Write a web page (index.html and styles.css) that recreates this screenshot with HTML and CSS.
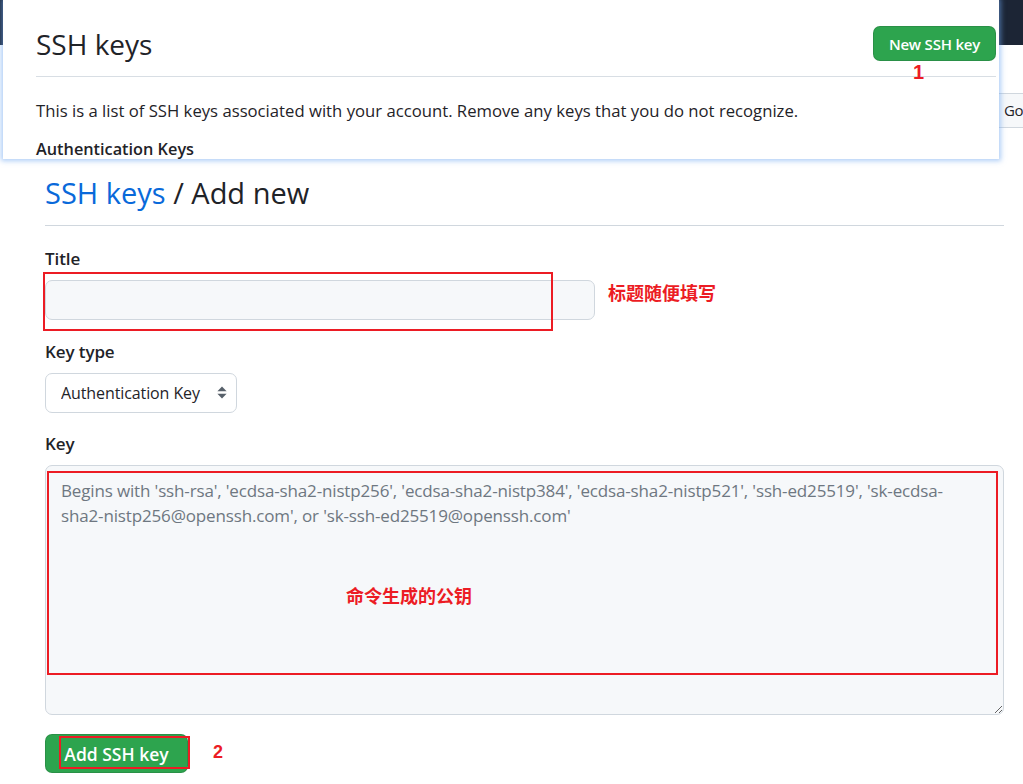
FILE: index.html
```html
<!DOCTYPE html>
<html lang="en">
<head>
<meta charset="utf-8">
<title>SSH keys / Add new</title>
<link rel="stylesheet" href="styles.css">
</head>
<body>
  <div class="topbar"></div>
  <div class="go-btn">Go</div>

  <section class="shot">
    <div class="shot-head">
      <h2 class="shot-title">SSH keys</h2>
      <button class="btn-primary btn-new" type="button">New SSH key</button>
    </div>
    <p class="shot-text">This is a list of SSH keys associated with your account. Remove any keys that you do not recognize.</p>
    <h3 class="shot-sub">Authentication Keys</h3>
    <span class="mark mark-one">1</span>
  </section>

  <main class="content">
    <div class="subhead">
      <h2 class="subhead-title"><a class="crumb" href="#">SSH keys</a> / Add new</h2>
    </div>

    <form class="form">
      <div class="group group-title">
        <label class="label" for="title">Title</label>
        <div class="field-row">
          <div class="field">
            <input id="title" class="input" type="text">
            <span class="box box-title"></span>
          </div>
          <span class="note note-title">标题随便填写</span>
        </div>
      </div>

      <div class="group group-type">
        <label class="label" for="type">Key type</label>
        <div class="select-wrap">
          <select id="type" class="select">
            <option>Authentication Key</option>
            <option>Signing Key</option>
          </select>
          <svg class="select-arrow" width="10" height="13" viewBox="0 0 10 13" aria-hidden="true">
            <path d="M5 0.5 L9.6 5.2 H0.4 Z" fill="#57606a"/>
            <path d="M0.4 7.8 H9.6 L5 12.5 Z" fill="#57606a"/>
          </svg>
        </div>
      </div>

      <div class="group group-key">
        <label class="label" for="key">Key</label>
        <div class="key-wrap">
          <textarea id="key" class="textarea" placeholder="Begins with 'ssh-rsa', 'ecdsa-sha2-nistp256', 'ecdsa-sha2-nistp384', 'ecdsa-sha2-nistp521', 'ssh-ed25519', 'sk-ecdsa-&#10;sha2-nistp256@openssh.com', or 'sk-ssh-ed25519@openssh.com'"></textarea>
          <span class="box box-key"></span>
          <span class="note note-key">命令生成的公钥</span>
        </div>
      </div>

      <div class="actions">
        <div class="btn-wrap">
          <button class="btn-primary btn-add" type="button">Add SSH key</button>
          <span class="box box-btn"></span>
        </div>
        <span class="mark mark-two">2</span>
      </div>
    </form>
  </main>
</body>
</html>
```

FILE: styles.css
```css
* { box-sizing: border-box; }

html, body {
  margin: 0;
  padding: 0;
}

body {
  position: relative;
  width: 1023px;
  height: 784px;
  overflow: hidden;
  background: #ffffff;
  color: #1f2328;
  font-family: "Open Sans", "Noto Sans", sans-serif;
}

/* ---------- background page ---------- */
.topbar {
  height: 45px;
  background: #1c2535;
}

.go-btn {
  position: absolute;
  left: 998px;
  top: 93px;
  width: 60px;
  height: 35px;
  padding-left: 5px;
  background: #f6f8fa;
  border: 1px solid #d0d7de;
  font-size: 15px;
  letter-spacing: -0.3px;
  line-height: 33px;
  color: #1f2328;
}

/* ---------- overlay screenshot panel ---------- */
.shot {
  position: absolute;
  left: 3px;
  top: 0;
  width: 996px;
  height: 159px;
  padding: 0 3px 0 33px;
  background: #ffffff;
  box-shadow: 0 0 5px 2px rgba(110, 165, 240, 0.55);
  overflow: hidden;
  z-index: 2;
}

.shot-head {
  display: flex;
  justify-content: space-between;
  align-items: flex-start;
  padding-top: 26px;
  padding-bottom: 14px;
  border-bottom: 1px solid #d8dee4;
}

.shot-title {
  margin: 0;
  font-size: 28px;
  font-weight: 400;
  line-height: 36px;
  color: #1f2328;
}

.btn-primary {
  display: inline-flex;
  align-items: center;
  justify-content: center;
  border: 1px solid rgba(27, 31, 36, 0.15);
  border-radius: 7px;
  background: #2da44e;
  color: #ffffff;
  font-family: inherit;
  font-weight: 600;
  cursor: pointer;
}

.btn-new {
  width: 123px;
  height: 35px;
  padding: 0;
  font-size: 15px;
  letter-spacing: -0.2px;
}

.shot-text {
  margin: 22px 0 0;
  font-size: 16.7px;
  line-height: 24px;
}

.shot-sub {
  margin: 14px 0 0;
  font-size: 16.3px;
  font-weight: 600;
  line-height: 24px;
}

.mark {
  color: #ec1c24;
  font-family: "Liberation Sans", Arial, sans-serif;
  font-weight: 700;
}

.mark-one {
  position: absolute;
  left: 910px;
  top: 62px;
  font-size: 20px;
  line-height: 20px;
}

/* ---------- main form ---------- */
.content {
  width: 1004px;
  padding: 125px 0 0 45px;
}

.subhead {
  padding-bottom: 10px;
  border-bottom: 1px solid #d0d7de;
}

.subhead-title {
  margin: 0;
  font-size: 29px;
  font-weight: 400;
  line-height: 45px;
  color: #1f2328;
}

.crumb {
  color: #0969da;
  text-decoration: none;
}

.form {
  display: flex;
  flex-direction: column;
}

.group-title { margin-top: 20px; }
.group-type  { margin-top: 19px; }
.group-key   { margin-top: 18px; }

.label {
  display: block;
  margin-bottom: 8px;
  font-size: 17px;
  letter-spacing: -0.1px;
  font-weight: 600;
  line-height: 26px;
}

.field-row {
  display: flex;
  align-items: flex-start;
}

.field {
  position: relative;
}

.input {
  display: block;
  width: 550px;
  height: 40px;
  padding: 0 15px;
  background: #f6f8fa;
  border: 1px solid #d0d7de;
  border-radius: 7px;
  font-family: inherit;
  font-size: 17px;
  outline: none;
}

.box {
  position: absolute;
  border: 2px solid #ec1c24;
  pointer-events: none;
}

.box-title {
  left: -2px;
  top: -8px;
  width: 510px;
  height: 59px;
}

.note {
  color: #ec1c24;
  font-family: "Noto Sans CJK SC", "Noto Sans", sans-serif;
  font-weight: 700;
  font-size: 18px;
  line-height: 18px;
}

.note-title {
  margin-left: 13px;
  margin-top: 3px;
}

.select-wrap {
  position: relative;
  width: 192px;
}

.select {
  display: block;
  width: 192px;
  height: 40px;
  padding: 0 20px 0 15px;
  background: #ffffff;
  border: 1px solid #d0d7de;
  border-radius: 7px;
  font-family: inherit;
  font-size: 16px;
  letter-spacing: -0.1px;
  color: #1f2328;
  -webkit-appearance: none;
  appearance: none;
  outline: none;
}

.select-arrow {
  position: absolute;
  right: 10px;
  top: 13px;
  pointer-events: none;
}

.key-wrap {
  position: relative;
}

.textarea {
  display: block;
  width: 959px;
  height: 250px;
  padding: 12px 15px;
  background: #f6f8fa;
  border: 1px solid #d0d7de;
  border-radius: 7px;
  font-family: inherit;
  font-size: 17px;
  letter-spacing: -0.15px;
  line-height: 25px;
  color: #1f2328;
  resize: vertical;
  outline: none;
}

.textarea::placeholder {
  color: #6e7781;
}

.box-key {
  left: 2px;
  top: 6px;
  width: 951px;
  height: 204px;
}

.note-key {
  position: absolute;
  left: 301px;
  top: 121px;
}

.actions {
  display: flex;
  align-items: center;
  margin-top: 19px;
}

.btn-wrap {
  position: relative;
}

.btn-add {
  width: 143px;
  height: 39px;
  padding: 0;
  font-size: 17.5px;
}

.box-btn {
  left: 14px;
  top: 2px;
  width: 131px;
  height: 33px;
}

.mark-two {
  margin-left: 25px;
  margin-top: -4px;
  font-size: 18px;
  line-height: 18px;
}
```
